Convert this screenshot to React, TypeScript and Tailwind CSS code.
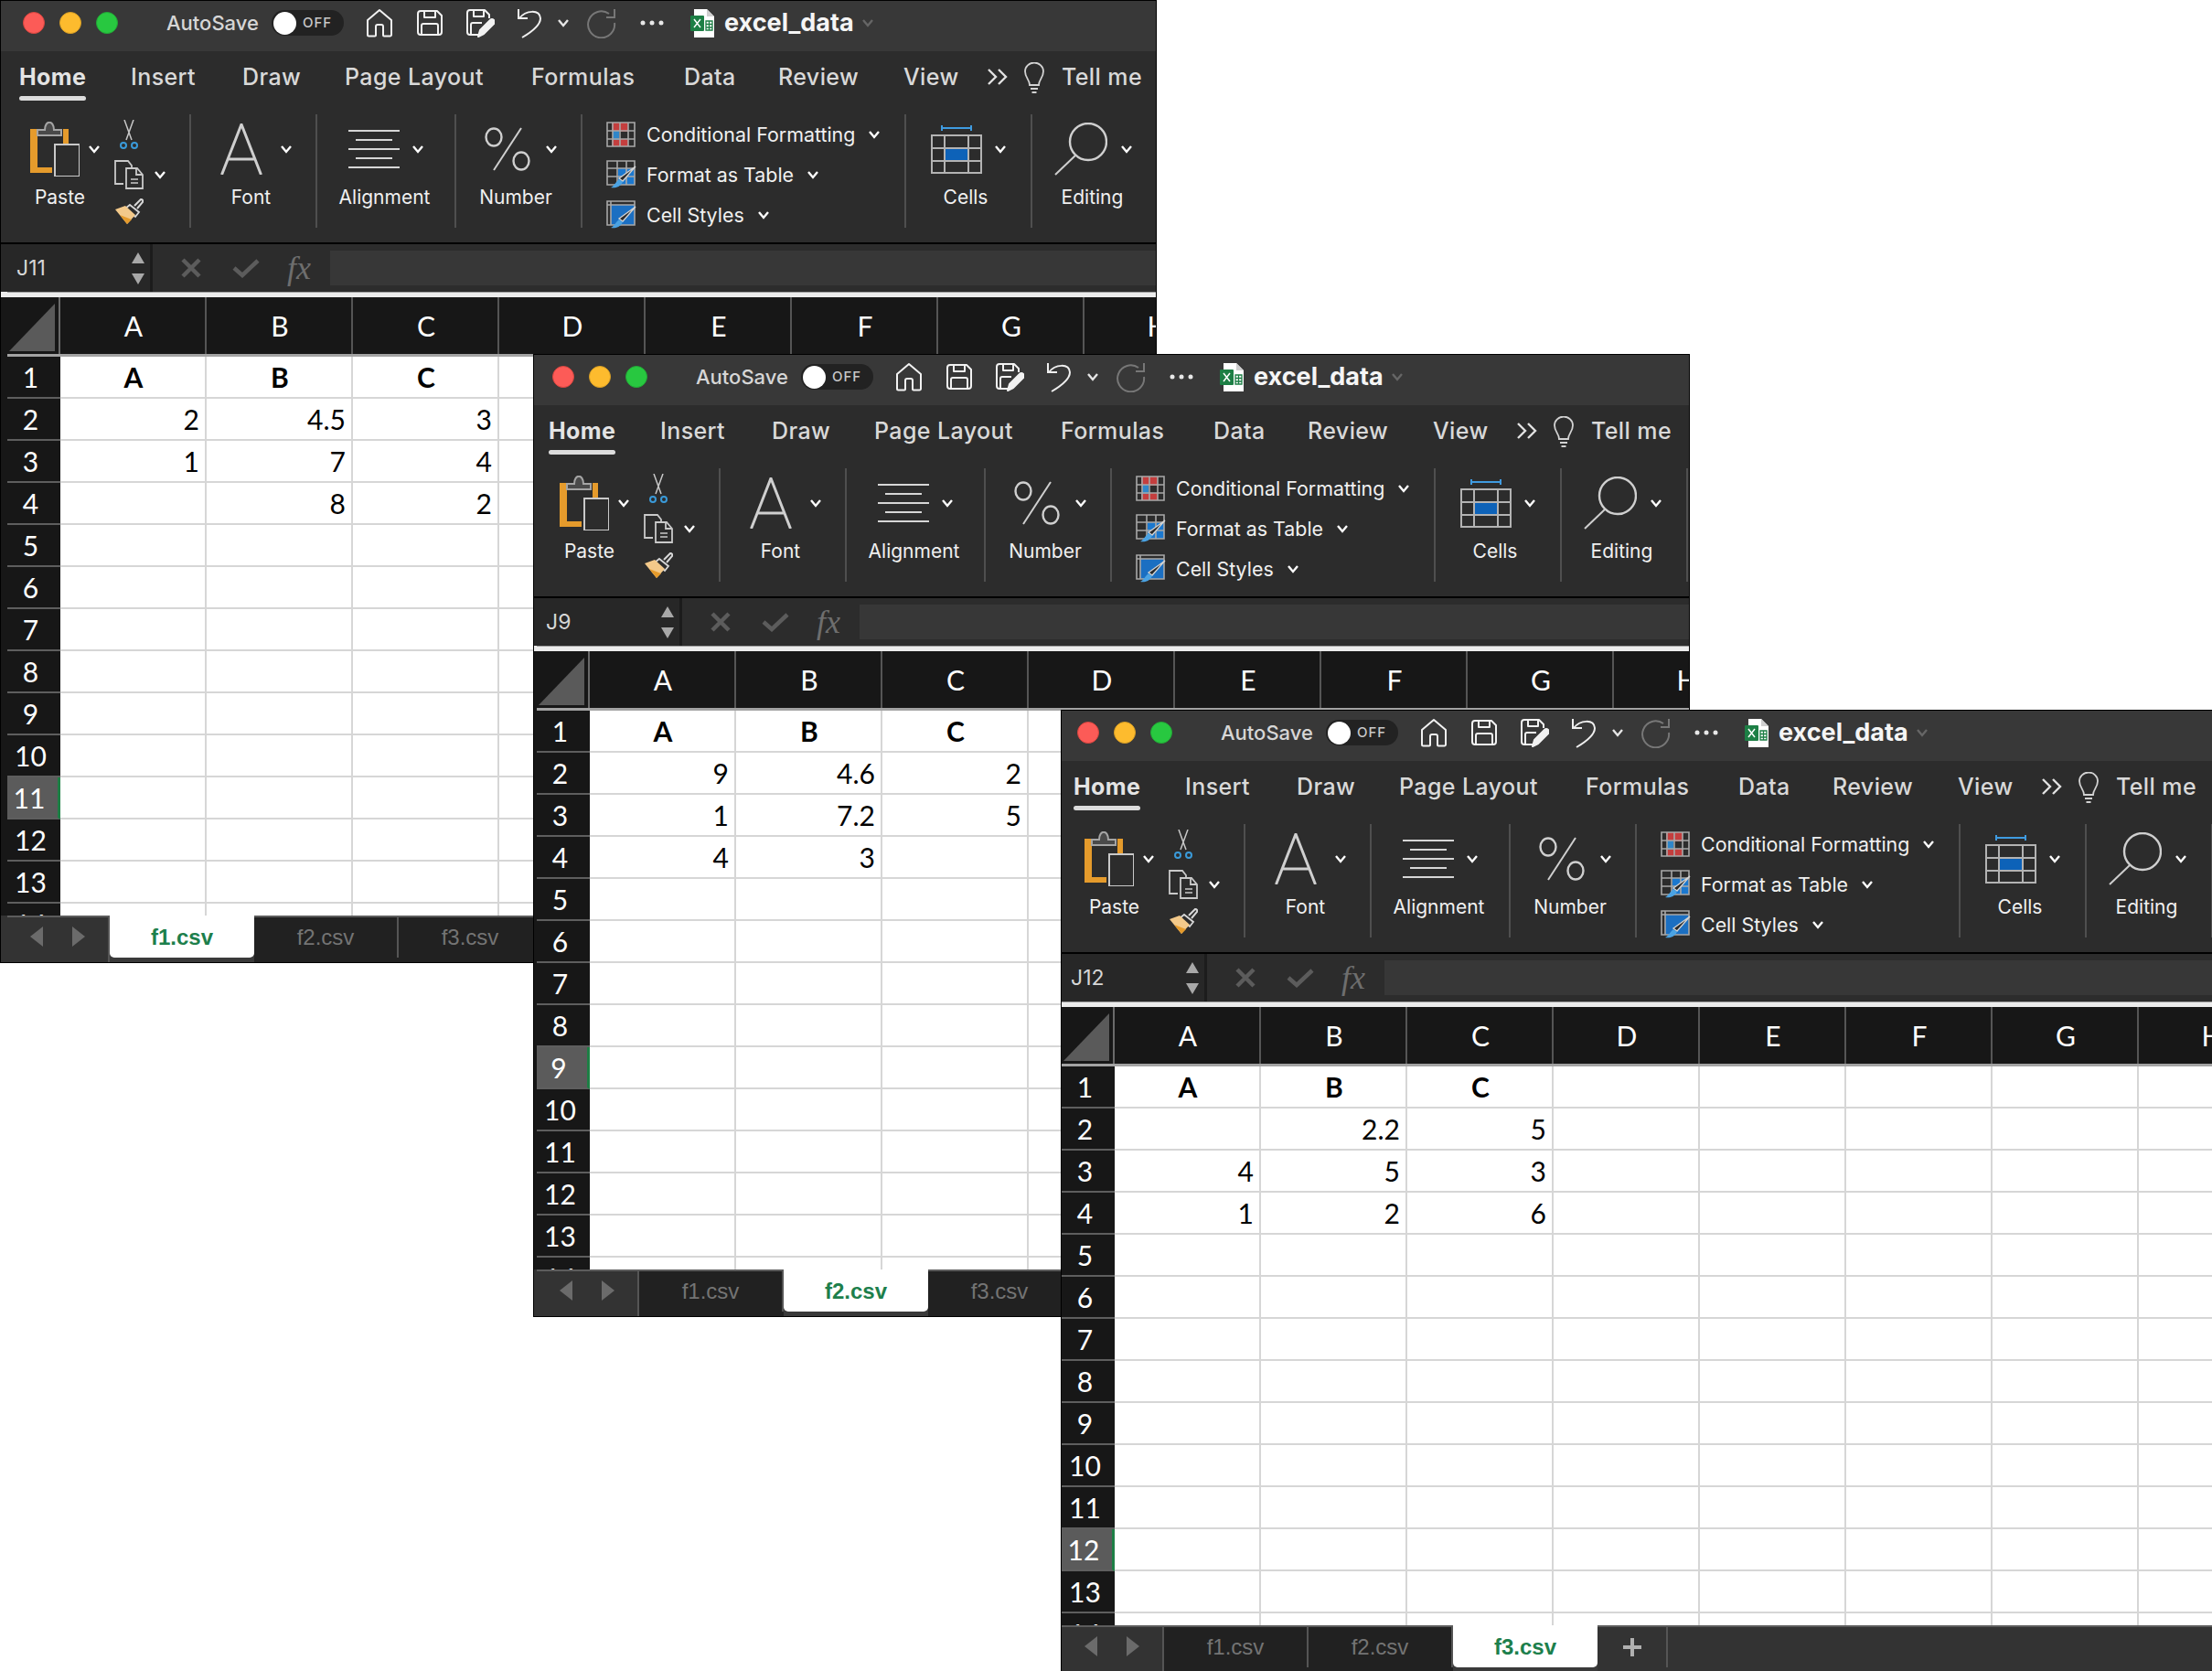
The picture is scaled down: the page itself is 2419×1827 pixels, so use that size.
import { ReactNode } from "react";

const Chevron = ({ className = "" }: { className?: string }) => (
  <svg width="14" height="10" viewBox="0 0 14 10" className={className} fill="none" stroke="currentColor" strokeWidth="2.4">
    <path d="M2 2 L7 8 L12 2" />
  </svg>
);

const HomeIcon = () => (
  <svg width="30" height="32" viewBox="0 0 30 32" fill="none" stroke="#f2f2f2" strokeWidth="2" strokeLinejoin="round">
    <path d="M15 2 L2 13 V29 a1.5 1.5 0 0 0 1.5 1.5 H10 a1 1 0 0 0 1-1 V20 a2 2 0 0 1 2-2 H17 a2 2 0 0 1 2 2 V29.500 a1 1 0 0 0 1 1 H26.500 a1.500 1.500 0 0 0 1.500-1.500 V13 Z" />
  </svg>
);

const SaveIcon = () => (
  <svg width="30" height="30" viewBox="0 0 30 30" fill="none" stroke="#f2f2f2" strokeWidth="2" strokeLinejoin="round">
    <path d="M5 2 H23 L28 7 V25 a3 3 0 0 1-3 3 H5 a3 3 0 0 1-3-3 V5 a3 3 0 0 1 3-3 Z" />
    <path d="M9 2 V9 H21 V2" />
    <path d="M6 28 V18 a2 2 0 0 1 2-2 H22 a2 2 0 0 1 2 2 V28" />
  </svg>
);

const SaveAsIcon = () => (
  <svg width="32" height="32" viewBox="0 0 32 32" fill="none" stroke="#f2f2f2" strokeWidth="2" strokeLinejoin="round">
    <path d="M14 29 H5 a3 3 0 0 1-3-3 V5 a3 3 0 0 1 3-3 H21 L26 7 V11" />
    <path d="M9 2 V9 H20 V2" />
    <path d="M6 28 V18 a2 2 0 0 1 2-2 H18" />
    <path d="M14 31 L16 24 L27 13 a2.500 2.500 0 0 1 4 4 L20 28 Z" fill="#f2f2f2" />
  </svg>
);

const UndoIcon = () => (
  <svg width="28" height="34" viewBox="0 0 28 34" fill="none" stroke="#efefef" strokeWidth="2">
    <path d="M2 2 V12 H12" />
    <path d="M3 12 C10 3 25 2 26 12 C26 18 18 26 6 33" />
  </svg>
);

const RedoIcon = () => (
  <svg width="32" height="34" viewBox="0 0 32 34" fill="none" stroke="#777" strokeWidth="2">
    <path d="M24 7 A14.500 14.500 0 1 0 30 17" />
    <path d="M30 2 V11 H21" />
  </svg>
);

const Dots = () => (
  <svg width="26" height="6" viewBox="0 0 26 6" fill="#e8e8e8">
    <circle cx="3" cy="3" r="2.500" />
    <circle cx="13" cy="3" r="2.500" />
    <circle cx="23" cy="3" r="2.500" />
  </svg>
);

const FileIcon = () => (
  <svg width="27" height="31" viewBox="0 0 27 31">
    <path d="M4 0 H18 L26 8 V31 H4 Z" fill="#fff" />
    <path d="M18 0 L26 8 H18 Z" fill="#cfcfcf" />
    <rect x="0" y="7" width="15" height="17" rx="1" fill="#1d7f45" />
    <path d="M4 11 L11 20 M11 11 L4 20" stroke="#fff" strokeWidth="1.500" />
    <path d="M17 13 H24 V23 H17 Z M20.500 13 V23 M17 16.500 H24 M17 20 H24" fill="none" stroke="#1d7f45" strokeWidth="1.300" />
  </svg>
);

const PasteIcon = () => (
  <svg width="54" height="60" viewBox="0 0 54 60" fill="none">
    <path d="M0 8 H8 V50 H24 V56 H0 Z" fill="#e59b2c" />
    <path d="M36 8 H42 V24 H36 Z" fill="#e59b2c" />
    <path d="M8 15 H34 V9 H26 C26 -2 16 -2 16 9 H8 Z" stroke="#a5a5a5" strokeWidth="2" fill="#4a4a4a" />
    <rect x="27" y="25" width="27" height="35" stroke="#c9c9c9" strokeWidth="2" />
  </svg>
);

const ScissorsIcon = () => (
  <svg width="20" height="32" viewBox="0 0 20 32" fill="none">
    <path d="M5 0 L13 22 M15 0 L7 22" stroke="#c8c8c8" strokeWidth="1.500" />
    <circle cx="4" cy="28" r="3" stroke="#3a9ad9" strokeWidth="2" />
    <circle cx="16" cy="28" r="3" stroke="#3a9ad9" strokeWidth="2" />
  </svg>
);

const CopyIcon = () => (
  <svg width="32" height="32" viewBox="0 0 32 32" fill="none" stroke="#c9c9c9" strokeWidth="1.800">
    <path d="M10 26 H1 V1 H15 L19 6 V9" />
    <path d="M13 9 H25 L31 16 V31 H13 Z" />
    <path d="M24 9 V16 H31" />
    <path d="M18 21 H26 M18 25 H26" strokeWidth="1.500" />
  </svg>
);

const BrushIcon = () => (
  <svg width="32" height="30" viewBox="0 0 32 30" fill="none">
    <path d="M22 9 L29 2 a2 2 0 0 1 2 3 L25 12" stroke="#d8d8d8" strokeWidth="2" />
    <path d="M17 8 L27 16 L23 21 L12 12 Z" stroke="#d8d8d8" strokeWidth="1.800" />
    <path d="M12 9 L1 13 L14 29 L23 19 Z" fill="#f3c98a" />
    <path d="M6 19 L19 24 L14 29 Z" fill="#e59b2c" />
  </svg>
);

const AIcon = () => (
  <svg width="46" height="56" viewBox="0 0 46 56" fill="none" stroke="#cfcfcf" strokeWidth="3">
    <path d="M1.500 56 L23 1 L44.500 56 M8 39 H38" />
  </svg>
);

const AlignIcon = () => (
  <svg width="56" height="42" viewBox="0 0 56 42" stroke="#d6d6d6" strokeWidth="2">
    <path d="M0 1 H56 M8 11 H48 M0 21 H56 M8 31 H48 M0 41 H56" />
  </svg>
);

const PercentIcon = () => (
  <svg width="50" height="48" viewBox="0 0 50 48" fill="none" stroke="#cfcfcf" strokeWidth="2.400">
    <ellipse cx="10" cy="11" rx="8.500" ry="9.500" />
    <ellipse cx="40" cy="37" rx="8.500" ry="9.500" />
    <path d="M40 1 L10 47" strokeWidth="2" />
  </svg>
);

const CfIcon = () => (
  <svg width="32" height="28" viewBox="0 0 32 28" fill="none">
    <rect x="6" y="1" width="18" height="10" fill="#c43e3e" />
    <rect x="6" y="19" width="18" height="8" fill="#c43e3e" />
    <rect x="7" y="10" width="7" height="10" fill="#2f86c9" />
    <path d="M1 1 H31 V27 H1 Z M1 10 H31 M1 19 H31 M7 1 V27 M15 1 V27 M24 1 V27" stroke="#a8a8a8" strokeWidth="1.600" />
  </svg>
);

const TableStyleIcon = ({ full = false }: { full?: boolean }) => (
  <svg width="34" height="32" viewBox="0 0 34 32" fill="none">
    {full ? <rect x="5" y="5" width="26" height="22" fill="#1b6fc2" /> : <rect x="13" y="9" width="18" height="18" fill="#1b78cf" />}
    <path d={full ? "M1 1 H31 V27 H1 Z M1 5 H31 M5 1 V27" : "M1 1 H31 V27 H1 Z M1 9 H31 M1 18 H31 M12 1 V27 M22 1 V27"} stroke="#a8a8a8" strokeWidth="1.600" />
    <path d="M32 7 L18 23 L14 20 Z" fill="#2b2b2b" stroke="#d4d4d4" strokeWidth="1.300" />
    <path d="M14 21 L18 24 C15 30 9 31 5 30 C9 28 10 24 14 21 Z" fill="#4ba3e3" />
  </svg>
);

const CellsIcon = () => (
  <svg width="56" height="54" viewBox="0 0 56 54" fill="none">
    <path d="M12 4 H44 M12 1 V7 M44 1 V7" stroke="#3f9be0" strokeWidth="2" />
    <rect x="15" y="26" width="26" height="14" fill="#0d62b8" />
    <path d="M1 12 H55 V53 H1 Z M1 26 H55 M1 40 H55 M15 12 V53 M41 12 V53" stroke="#b3b3b3" strokeWidth="2" />
  </svg>
);

const SearchIcon = () => (
  <svg width="58" height="58" viewBox="0 0 58 58" fill="none" stroke="#cfcfcf">
    <ellipse cx="37" cy="21" rx="20" ry="20" strokeWidth="2.400" />
    <path d="M23 36 L1 57" strokeWidth="2" />
  </svg>
);

const BigGroup = ({ width, icon, label, pad, gap, labelClass = "" }: { width: string; icon: ReactNode; label: string; pad: string; gap: string; labelClass?: string }) => (
  <div className={`${width} h-[124px] flex flex-col border-r-2 border-[#4f4f4f] shrink-0`}>
    <div className={`flex items-center h-[70px] mt-[3px] shrink-0 ${pad}`}>
      {icon}
      <Chevron className={`text-white ${gap}`} />
    </div>
    <div className={`mt-[6px] text-center text-[21px] leading-6 text-[#f0f0f0] ${labelClass}`}>{label}</div>
  </div>
);

const StyleRow = ({ icon, label }: { icon: ReactNode; label: string }) => (
  <div className="flex items-center h-[44px] shrink-0">
    <div className="w-[44px] shrink-0">{icon}</div>
    <span className="text-[21.4px] leading-6 text-[#f0f0f0] whitespace-nowrap">{label}</span>
    <Chevron className="text-white ml-[14px]" />
  </div>
);

const RIBBON_TABS = [
  { name: "Home", width: "w-[122px]" },
  { name: "Insert", width: "w-[122px]" },
  { name: "Draw", width: "w-[112px]" },
  { name: "Page Layout", width: "w-[204px]" },
  { name: "Formulas", width: "w-[167px]" },
  { name: "Data", width: "w-[103px]" },
  { name: "Review", width: "w-[137px]" },
  { name: "View", width: "w-[91px]" },
];

const COLUMNS = ["A", "B", "C", "D", "E", "F", "G", "H"];
const SHEETS = ["f1.csv", "f2.csv", "f3.csv"];

type WindowProps = {
  position: string;
  edge: string;
  cell: string;
  selectedRow: number;
  activeSheet: number;
  rows: string[][];
  showAdd?: boolean;
};

const ExcelWindow = ({ position, edge, cell, selectedRow, activeSheet, rows, showAdd }: WindowProps) => {
  const rowNumbers = [1, 2, 3, 4, 5, 6, 7, 8, 9, 10, 11, 12, 13, 14];
  return (
    <div className={`absolute ${position} w-[1265px] h-[1053px] flex bg-[#2c2c2c] overflow-hidden font-['Inter',sans-serif] border border-black`}>
      {/* the windows are cropped a little differently, this strip carries the section colours */}
      <div className={`${edge} shrink-0 flex flex-col`}>
        <div className="h-[55px] bg-[#383838]" />
        <div className="h-[209px] bg-[#2c2c2c]" />
        <div className="h-[2px] bg-black" />
        <div className="h-[52px] bg-[#272727]" />
        <div className="h-[6px] bg-[#ececec]" />
        <div className="h-[676px] bg-[#171717]" />
        <div className="flex-1 bg-[#333]" />
      </div>
      <div className="flex-1 min-w-0 flex flex-col">
        {/* title bar */}
        <div className="h-[55px] shrink-0 flex items-center pb-[7px] bg-[#383838]">
          <div className="w-[24px] h-[24px] rounded-full bg-[#fc5b57] ml-[17px] border border-[#d8453f]" />
          <div className="w-[24px] h-[24px] rounded-full bg-[#fdbb2e] ml-[16px] border border-[#d99f24]" />
          <div className="w-[24px] h-[24px] rounded-full bg-[#28c840] ml-[16px] border border-[#22a836]" />
          <span className="ml-[53px] text-[22px] text-[#d6d6d6] font-medium leading-6 w-[115px] whitespace-nowrap">AutoSave</span>
          <div className="w-[79px] h-[28px] rounded-full bg-[#222] flex items-center pl-[2px]">
            <div className="w-[25px] h-[25px] rounded-full bg-white" />
            <span className="ml-[7px] text-[15px] tracking-[1px] text-[#c8c8c8] font-medium">OFF</span>
          </div>
          <div className="ml-[24px] w-[55px]"><HomeIcon /></div>
          <div className="w-[54px]"><SaveIcon /></div>
          <div className="w-[56px]"><SaveAsIcon /></div>
          <div className="w-[44px]"><UndoIcon /></div>
          <Chevron className="text-[#e6e6e6]" />
          <div className="ml-[19px] w-[58px]"><RedoIcon /></div>
          <Dots />
          <div className="ml-[29px] w-[37px]"><FileIcon /></div>
          <span className="text-[27px] font-bold text-[#f5f5f5] leading-7">excel_data</span>
          <Chevron className="text-[#666] ml-[8px]" />
        </div>

        {/* ribbon tabs */}
        <div className="h-[57px] shrink-0 flex items-start pt-[14px] pl-[13px]">
          {RIBBON_TABS.map((tab, i) => (
            <div key={tab.name} className={`${tab.width} shrink-0 flex`}>
              <div className="flex flex-col">
                <span className={`text-[25px] tracking-[0.4px] leading-7 whitespace-nowrap ${i === 0 ? "font-bold text-[#e4e4e4]" : "font-medium text-[#d9d9d9]"}`}>{tab.name}</span>
                {i === 0 && <div className="h-[5px] mt-[7px] rounded-full bg-[#dcdcdc]" />}
              </div>
            </div>
          ))}
          <svg width="24" height="20" viewBox="0 0 24 20" fill="none" stroke="#e2e2e2" strokeWidth="2.400" className="mt-[4px] shrink-0">
            <path d="M2 2 L10 10 L2 18 M13 2 L21 10 L13 18" />
          </svg>
          <svg width="24" height="36" viewBox="0 0 24 36" fill="none" stroke="#d2d2d2" strokeWidth="1.800" className="ml-[16px] -mt-[2px] shrink-0">
            <path d="M7 25 C7 19 2 17 2 10 A10 9.500 0 0 1 22 10 C22 17 17 19 17 25 Z M8 29 H16 M9.500 33 H14.500" />
          </svg>
          <span className="ml-[18px] text-[25px] tracking-[0.4px] leading-7 font-medium text-[#d9d9d9] whitespace-nowrap">Tell me</span>
        </div>

        {/* ribbon */}
        <div className="h-[152px] shrink-0 flex pt-[12px]">
          <div className="w-[201px] h-[124px] shrink-0 flex border-r-2 border-[#4f4f4f]">
            <div className="w-[117px] shrink-0 flex flex-col">
              <div className="flex items-center pl-[25px] h-[70px] mt-[3px] shrink-0">
                <PasteIcon />
                <Chevron className="text-white ml-[9px]" />
              </div>
              <div className="mt-[6px] pr-[2px] text-center text-[21px] leading-6 text-[#f0f0f0]">Paste</div>
            </div>
            <div className="flex flex-col">
              <div className="h-[44px] shrink-0 pl-[6px] pt-[6px]"><ScissorsIcon /></div>
              <div className="h-[44px] shrink-0 flex items-center">
                <CopyIcon />
                <Chevron className="text-white ml-[11px]" />
              </div>
              <div className="h-[36px] shrink-0 pt-[3px]"><BrushIcon /></div>
            </div>
          </div>
          <BigGroup width="w-[138px]" icon={<AIcon />} label="Font" pad="pl-[32px]" gap="ml-[19px]" labelClass="pr-[5px]" />
          <BigGroup width="w-[152px]" icon={<AlignIcon />} label="Alignment" pad="pl-[34px]" gap="ml-[13px]" labelClass="pr-[3px]" />
          <BigGroup width="w-[138px]" icon={<PercentIcon />} label="Number" pad="pl-[31px]" gap="ml-[16px]" labelClass="pr-[6px]" />
          <div className="w-[354px] h-[124px] shrink-0 flex flex-col pl-[26px] border-r-2 border-[#4f4f4f]">
            <StyleRow icon={<CfIcon />} label="Conditional Formatting" />
            <StyleRow icon={<TableStyleIcon />} label="Format as Table" />
            <StyleRow icon={<TableStyleIcon full />} label="Cell Styles" />
          </div>
          <BigGroup width="w-[138px]" icon={<CellsIcon />} label="Cells" pad="pl-[27px]" gap="ml-[13px]" labelClass="pr-[6px]" />
          <BigGroup width="w-[138px]" icon={<SearchIcon />} label="Editing" pad="pl-[24px]" gap="ml-[14px]" labelClass="pr-[5px]" />
        </div>

        {/* formula bar */}
        <div className="h-[2px] shrink-0 bg-black" />
        <div className="h-[52px] shrink-0 flex items-center">
          <div className="w-[159px] h-full shrink-0 bg-[#272727] flex items-center pl-[10px] pr-[2px] border-r-[3px] border-[#1c1c1c]">
            <span className="text-[23px] text-[#d6d6d6]">{cell}</span>
            <div className="ml-auto mr-[4px] flex flex-col gap-[11px]">
              <div className="w-0 h-0 border-x-[7px] border-x-transparent border-b-[12px] border-b-[#a8a8a8]" />
              <div className="w-0 h-0 border-x-[7px] border-x-transparent border-t-[12px] border-t-[#a8a8a8]" />
            </div>
          </div>
          <svg width="22" height="22" viewBox="0 0 22 22" className="ml-[31px] shrink-0" stroke="#5c5c5c" strokeWidth="4.500">
            <path d="M2 2 L20 20 M20 2 L2 20" />
          </svg>
          <svg width="30" height="22" viewBox="0 0 30 22" fill="none" className="ml-[34px] shrink-0" stroke="#5c5c5c" strokeWidth="4.500">
            <path d="M2 11 L11 19 L28 3" />
          </svg>
          <span className="ml-[30px] w-[47px] text-[36px] leading-none italic text-[#6e6e6e] font-['Liberation_Serif',serif]">fx</span>
          <div className="flex-1 h-[38px] bg-[#373737]" />
        </div>
        <div className="h-[6px] shrink-0 bg-[#ececec] border-t border-[#9e9e9e]" />

        {/* sheet */}
        <div className="h-[676px] shrink-0 overflow-hidden font-['Lato',sans-serif] text-[30px] bg-white">
          <div className="flex h-[65px] bg-[#171717] border-b-[3px] border-[#a3a3a3] text-white">
            <div className="w-[58px] shrink-0 flex items-end justify-end pr-[4px] pb-[3px] border-r-2 border-[#6a6a6a]">
              <div className="w-0 h-0 border-l-[50px] border-l-transparent border-b-[52px] border-b-[#5a5a5a]" />
            </div>
            {COLUMNS.map((c) => (
              <div key={c} className="w-[160px] shrink-0 flex items-center justify-center pl-[2px] border-r-2 border-[#555]">{c}</div>
            ))}
          </div>
          {rowNumbers.map((n) => {
            const row = rows[n - 1] ?? [];
            return (
              <div key={n} className="flex h-[46px]">
                <div className={`w-[58px] shrink-0 flex items-center justify-center pr-[7px] text-white border-b-2 border-[#5e5e5e] ${n === selectedRow ? "bg-[#5b5b5b] border-r-[3px] border-r-[#1d7f45]" : "bg-[#171717]"}`}>{n}</div>
                {COLUMNS.map((c, i) => (
                  <div key={c} className={`w-[160px] shrink-0 flex items-center text-black border-r-2 border-b-2 border-[#d6d6d6] ${n === 1 ? "justify-center font-bold pl-[2px]" : "justify-end pr-[6px]"}`}>
                    {row[i]}
                  </div>
                ))}
              </div>
            );
          })}
        </div>

        {/* sheet tabs */}
        <div className="flex-1 flex bg-[#333] border-t-2 border-[#5c5c5c] font-['Liberation_Sans',sans-serif] text-[24px]">
          <div className="w-[112px] shrink-0 flex items-center pl-[25px] pb-[8px] border-r-2 border-[#555]">
            <div className="w-0 h-0 border-y-[11px] border-y-transparent border-r-[14px] border-r-[#6b6b6b]" />
            <div className="ml-[32px] w-0 h-0 border-y-[11px] border-y-transparent border-l-[14px] border-l-[#6b6b6b]" />
          </div>
          {SHEETS.map((s, i) =>
            i === activeSheet ? (
              <div key={s} className="w-[158px] shrink-0 flex flex-col -mt-[2px] bg-[#3a3a3a]">
                <div className="h-[46px] pt-[2px] bg-white rounded-b-[5px] flex items-center justify-center text-[#1d7f4c] font-bold">{s}</div>
              </div>
            ) : (
              <div key={s} className="w-[158px] shrink-0 bg-[#212121]">
                <div className="h-[44px] flex items-center justify-center text-[#747474] border-r-2 border-[#555]">{s}</div>
              </div>
            )
          )}
          {showAdd && (
            <div className="w-[77px] h-[44px] shrink-0 flex items-center justify-center border-r-2 border-[#555] text-[#b0b0b0]">
              <svg width="22" height="22" viewBox="0 0 22 22" stroke="currentColor" strokeWidth="4">
                <path d="M11 1 V21 M1 11 H21" />
              </svg>
            </div>
          )}
        </div>
      </div>
    </div>
  );
};

const App = () => {
  return (
    <div className="relative w-[2419px] h-[1827px] overflow-hidden bg-white">
      <ExcelWindow
        position="left-0 top-0"
        edge="w-[7px]"
        cell="J11"
        selectedRow={11}
        activeSheet={0}
        rows={[["A", "B", "C"], ["2", "4.5", "3"], ["1", "7", "4"], ["", "8", "2"]]}
      />
      <ExcelWindow
        position="left-[583px] top-[387px]"
        edge="w-[3px]"
        cell="J9"
        selectedRow={9}
        activeSheet={1}
        rows={[["A", "B", "C"], ["9", "4.6", "2"], ["1", "7.2", "5"], ["4", "3", ""]]}
      />
      <ExcelWindow
        position="left-[1160px] top-[776px]"
        edge="w-0"
        cell="J12"
        selectedRow={12}
        activeSheet={2}
        rows={[["A", "B", "C"], ["", "2.2", "5"], ["4", "5", "3"], ["1", "2", "6"]]}
        showAdd
      />
    </div>
  );
};

export default App;
